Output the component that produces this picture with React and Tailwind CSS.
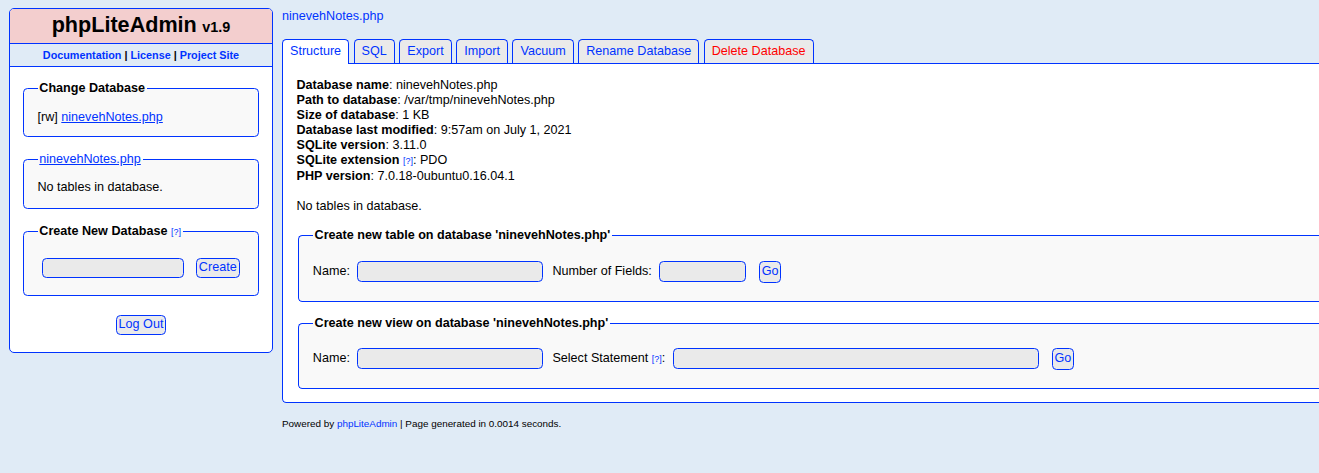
import React from "react";

const BLUE = "text-[#0033ff]";

function Input({ w, h = "h-[21px]", ml }) {
  return (
    <input
      type="text"
      className={`${w} ${h} ${ml} shrink-0 bg-[#eaeaea] border border-[#0033ff] rounded-[4.5px] px-[3px] text-[#0033ff] outline-none`}
    />
  );
}

function Btn({ children, w, h, ml = "" }) {
  return (
    <button
      type="button"
      className={`${w} ${h} ${ml} shrink-0 bg-[#eaeaea] border border-[#0033ff] rounded-[4.5px] text-[#0033ff] text-[12.6px] leading-[15px] flex items-center justify-center p-0`}
    >
      {children}
    </button>
  );
}

function Help() {
  return <a className="text-[#0033ff] text-[9px] font-normal">[?]</a>;
}

const tabs = [
  { label: "Structure", active: true },
  { label: "SQL" },
  { label: "Export" },
  { label: "Import" },
  { label: "Vacuum" },
  { label: "Rename Database" },
  { label: "Delete Database", danger: true },
];

const info = [
  ["Database name", "ninevehNotes.php"],
  ["Path to database", "/var/tmp/ninevehNotes.php"],
  ["Size of database", "1 KB"],
  ["Database last modified", "9:57am on July 1, 2021"],
  ["SQLite version", "3.11.0"],
  ["SQLite extension", "PDO", true],
  ["PHP version", "7.0.18-0ubuntu0.16.04.1"],
];

export default function App() {
  return (
    <div className="min-h-screen w-full overflow-hidden bg-[#e0ebf6] text-black flex items-start font-['Liberation_Sans',Arial,Helvetica,sans-serif] text-[12.6px] leading-[15px]">
      {/* Left panel */}
      <div className="ml-[9px] mt-[8px] w-[264px] shrink-0 border border-[#0033ff] rounded-[5px] bg-white pb-[17.5px]">
        <div className="h-[34px] bg-[#f3cece] rounded-t-[4px] flex items-center justify-center font-bold">
          <span>
            <span className="text-[21.6px]">phpLiteAdmin</span>
            <span className="text-[14.4px] ml-[5.5px]">v1.9</span>
          </span>
        </div>
        <div className="h-[24px] border-y border-[#0033ff] bg-[#e0ebf6] flex items-center justify-center text-[10.8px] font-bold whitespace-pre">
          <a className={BLUE}>Documentation</a>
          <span> | </span>
          <a className={BLUE}>License</a>
          <span> | </span>
          <a className={BLUE}>Project Site</a>
        </div>

        <fieldset className="mx-[13px] mt-[13.5px] border border-[#0033ff] rounded-[4.5px] bg-[#f9f9f9] px-[13.5px] pt-[14px] pb-[11.5px]">
          <legend className="px-[1.8px] font-bold">Change Database</legend>
          <div>
            [rw] <a className={`${BLUE} underline`}>ninevehNotes.php</a>
          </div>
        </fieldset>

        <fieldset className="mx-[13px] mt-[15px] border border-[#0033ff] rounded-[4.5px] bg-[#f9f9f9] px-[13.5px] pt-[13px] pb-[13px]">
          <legend className="px-[1.8px]">
            <a className={`${BLUE} underline`}>ninevehNotes.php</a>
          </legend>
          <div>No tables in database.</div>
        </fieldset>

        <fieldset className="mx-[13px] mt-[14.5px] border border-[#0033ff] rounded-[4.5px] bg-[#f9f9f9] px-[13.5px] pt-[18px] pb-[17.5px]">
          <legend className="px-[1.8px] font-bold">
            Create New Database <Help />
          </legend>
          <div className="flex items-center h-[20px]">
            <Input w="w-[141.5px]" h="h-[20px]" ml="ml-[4.5px]" />
            <Btn w="w-[43.5px]" h="h-[20px]" ml="ml-[12.5px]">
              Create
            </Btn>
          </div>
        </fieldset>

        <div className="mt-[18.5px] flex justify-center">
          <Btn w="w-[49.5px]" h="h-[20px]">
            Log Out
          </Btn>
        </div>
      </div>

      {/* Right column */}
      <div className="ml-[9px] flex-1 min-w-0 pt-[9px]">
        <a className={`block ${BLUE}`}>ninevehNotes.php</a>

        <div className="mt-[15px] flex items-end">
          {tabs.map((t) =>
            t.active ? (
              <div
                key={t.label}
                className="relative z-10 h-[25px] mb-[-1px] pb-[1px] mr-[4.5px] px-[7px] flex items-center border-t border-x border-[#0033ff] rounded-t-[4.5px] bg-white text-[#0033ff]"
              >
                {t.label}
              </div>
            ) : (
              <div
                key={t.label}
                className={`h-[24px] mr-[4.5px] px-[7px] flex items-center border-t border-x border-[#0033ff] rounded-t-[4.5px] bg-[#eaeaea] ${
                  t.danger ? "text-[#ff0000]" : "text-[#0033ff]"
                }`}
              >
                {t.label}
              </div>
            )
          )}
        </div>

        <div className="border border-r-0 border-[#0033ff] rounded-bl-[4.5px] bg-white pl-[13.5px] pt-[13.5px] pb-[13px]">
          {info.map(([k, v, help]) => (
            <div key={k}>
              <b>{k}</b>
              {help ? (
                <>
                  {" "}
                  <Help />
                </>
              ) : null}
              : {v}
            </div>
          ))}
          <div className="h-[15px]" />
          <div>No tables in database.</div>

          <fieldset className="mt-[14px] ml-[1.8px] border border-r-0 border-[#0033ff] rounded-l-[4.5px] bg-[#f9f9f9] pl-[13.5px] pt-[18.5px] pb-[18px]">
            <legend className="px-[1.8px] font-bold">
              Create new table on database 'ninevehNotes.php'
            </legend>
            <div className="flex items-center h-[21.5px]">
              <span>Name:</span>
              <Input w="w-[185.6px]" ml="ml-[7.5px]" />
              <span className="ml-[9.4px]">Number of Fields:</span>
              <Input w="w-[87.4px]" ml="ml-[7.3px]" />
              <Btn w="w-[22.4px]" h="h-[21.5px]" ml="ml-[12.6px]">
                Go
              </Btn>
            </div>
          </fieldset>

          <fieldset className="mt-[14.5px] ml-[1.8px] border border-r-0 border-[#0033ff] rounded-l-[4.5px] bg-[#f9f9f9] pl-[13.5px] pt-[17px] pb-[18px]">
            <legend className="px-[1.8px] font-bold">
              Create new view on database 'ninevehNotes.php'
            </legend>
            <div className="flex items-center h-[21.5px]">
              <span>Name:</span>
              <Input w="w-[185.6px]" ml="ml-[7.5px]" />
              <span className="ml-[9.4px]">
                Select Statement <Help />:
              </span>
              <Input w="w-[366px]" ml="ml-[7.9px]" />
              <Btn w="w-[22.4px]" h="h-[21.5px]" ml="ml-[12.6px]">
                Go
              </Btn>
            </div>
          </fieldset>
        </div>

        <div className="mt-[15.5px] text-[9.9px] leading-[12px]">
          Powered by <a className={BLUE}>phpLiteAdmin</a> | Page generated in 0.0014 seconds.
        </div>
      </div>
    </div>
  );
}
